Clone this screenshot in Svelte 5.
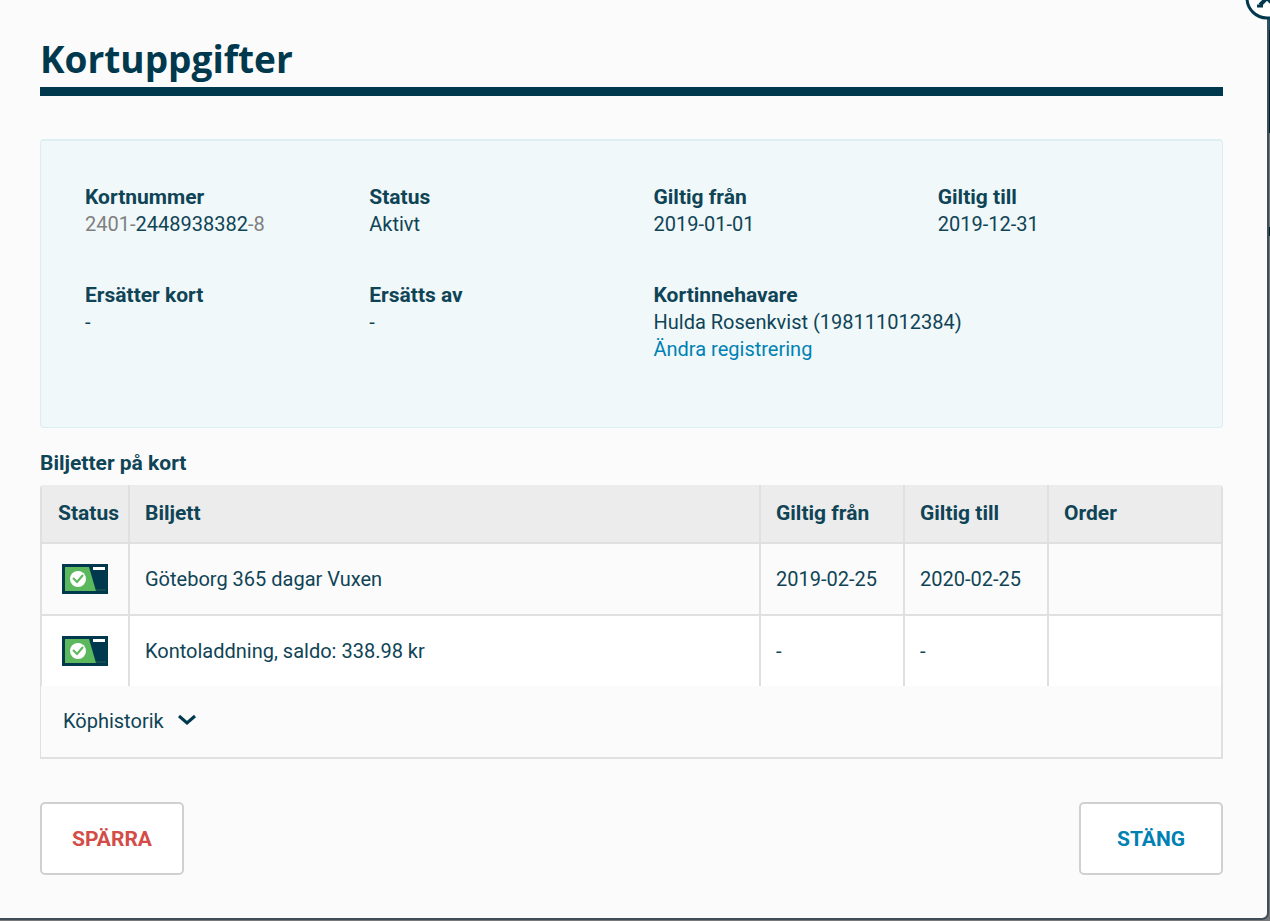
<script lang="ts">
  type Ticket = { id: number; name: string; from: string; to: string; order: string };

  const tickets: Ticket[] = [
    { id: 1, name: "Göteborg 365 dagar Vuxen", from: "2019-02-25", to: "2020-02-25", order: "" },
    { id: 2, name: "Kontoladdning, saldo: 338.98 kr", from: "-", to: "-", order: "" },
  ];

  let open = $state(true);

  function close() {
    open = false;
  }
</script>

<div class="page">
  {#if open}
    <div class="modal" role="dialog" aria-labelledby="card-title">
      <button class="close" aria-label="Stäng fönstret" onclick={close}>
        <svg viewBox="0 0 44 44" width="44" height="44" aria-hidden="true">
          <circle cx="22" cy="22" r="20" fill="#fff" stroke="#00394d" stroke-width="3" />
          <path d="M15 15l14 14M29 15L15 29" stroke="#00394d" stroke-width="4" />
          <path d="M12 30h6M26 30h6" stroke="#00394d" stroke-width="3" />
        </svg>
      </button>

      <h1 class="title" id="card-title">Kortuppgifter</h1>

      <dl class="details">
        <div class="detail">
          <dt>Kortnummer</dt>
          <dd><span class="dim">2401-</span>2448938382<span class="dim">-8</span></dd>
        </div>
        <div class="detail">
          <dt>Status</dt>
          <dd>Aktivt</dd>
        </div>
        <div class="detail">
          <dt>Giltig från</dt>
          <dd>2019-01-01</dd>
        </div>
        <div class="detail">
          <dt>Giltig till</dt>
          <dd>2019-12-31</dd>
        </div>
        <div class="detail">
          <dt>Ersätter kort</dt>
          <dd>-</dd>
        </div>
        <div class="detail">
          <dt>Ersätts av</dt>
          <dd>-</dd>
        </div>
        <div class="detail wide">
          <dt>Kortinnehavare</dt>
          <dd>Hulda Rosenkvist (198111012384)</dd>
          <dd><a class="link" href="#registrering">Ändra registrering</a></dd>
        </div>
      </dl>

      <h2 class="subtitle" id="tickets-title">Biljetter på kort</h2>

      <table class="tickets" aria-labelledby="tickets-title">
        <thead>
          <tr>
            <th class="status">Status</th>
            <th>Biljett</th>
            <th class="date">Giltig från</th>
            <th class="date">Giltig till</th>
            <th class="order">Order</th>
          </tr>
        </thead>
        <tbody>
          {#each tickets as ticket (ticket.id)}
            <tr>
              <td class="status">
                <svg class="card" viewBox="0 0 46 30" width="46" height="30" role="img" aria-label="Aktiv">
                  <rect width="46" height="30" fill="#00394d" />
                  <path d="M3 3h24l7 24H3z" fill="#5cb85c" />
                  <path d="M34 26h10" stroke="#1d6553" />
                  <rect x="31" y="3" width="12" height="3" fill="#fff" />
                  <circle cx="16" cy="15" r="8" fill="#fff" />
                  <path d="M11 14l4 4 6-7" fill="none" stroke="#5cb85c" stroke-width="2" />
                </svg>
              </td>
              <td>{ticket.name}</td>
              <td>{ticket.from}</td>
              <td>{ticket.to}</td>
              <td>{ticket.order}</td>
            </tr>
          {/each}
        </tbody>
      </table>

      <div class="history">
        <button class="toggle">
          Köphistorik
          <svg viewBox="0 0 18 16" width="18" height="16" aria-hidden="true">
            <path d="M1 2l8 7 8-7" fill="none" stroke="#00394d" stroke-width="3" />
          </svg>
        </button>
      </div>

      <div class="actions">
        <button class="btn danger">SPÄRRA</button>
        <button class="btn" onclick={close}>STÄNG</button>
      </div>
    </div>
  {/if}
</div>

<style>
  :global(body) {
    background: #6b6e70;
  }

  .page {
    box-sizing: border-box;
    min-height: 100vh;
    padding: 0 3px 3px 0;
    overflow: hidden;
    background: linear-gradient(#00506b 0 30px, #001d28 30px 133px, #77797a 133px 227px, #001d28 227px 236px, #77797a 236px);
    color: #0f4456;
    font-family: Roboto, "Liberation Sans", sans-serif;
    font-size: 20px;
    line-height: 27px;
  }

  .modal {
    position: relative;
    padding: 32px 44px 43px 40px;
    background: #fbfbfb;
    border-radius: 0 0 5px 0;
    box-shadow: 0 0 0 2px #3f4e58;
  }

  .close {
    position: absolute;
    top: -24px;
    right: -22px;
    width: 44px;
    height: 44px;
    padding: 0;
    border: 0;
    background: none;
    cursor: pointer;
  }

  .title {
    margin: 0 0 43px;
    padding-bottom: 1px;
    border-bottom: 9px solid #00394d;
    color: #00394d;
    font-family: "Open Sans", sans-serif;
    font-size: 37px;
    font-weight: 700;
    line-height: 54px;
  }

  .details {
    display: grid;
    grid-template-columns: repeat(4, 1fr);
    row-gap: 44px;
    margin: 0;
    padding: 43px 0 64px 44px;
    border: 2px solid #dceef1;
    border-width: 2px 1px 1px;
    border-radius: 4px;
    background: #f0f8fa;
  }

  .wide {
    grid-column: span 2;
  }

  dt,
  th,
  .subtitle {
    font-size: 21px;
    font-weight: 700;
  }

  dd {
    margin: 0;
  }

  .dim {
    color: #808080;
  }

  .link {
    color: #0081b3;
    text-decoration: none;
  }

  .subtitle {
    margin: 22px 0 8px;
  }

  .tickets {
    width: 100%;
    table-layout: fixed;
    border-collapse: separate;
    border-spacing: 0;
    border-right: 2px solid #e0e0e0;
    border-radius: 4px 4px 0 0;
    overflow: hidden;
  }

  th,
  td {
    box-sizing: border-box;
    padding: 0 15px;
    border-left: 2px solid #e0e0e0;
    text-align: left;
  }

  th {
    height: 57px;
    background: #ececec;
  }

  td {
    height: 72px;
    border-top: 2px solid #e0e0e0;
  }

  tbody tr:nth-child(even) {
    background: #fff;
  }

  .status {
    width: 88px;
    padding: 0;
  }

  th.status {
    padding-left: 16px;
  }

  .date {
    width: 144px;
  }

  .order {
    width: 174px;
  }

  .card {
    display: block;
    margin: 0 auto;
  }

  .history {
    padding: 22px;
    border: solid #e0e0e0;
    border-width: 0 2px 2px 1px;
  }

  .toggle {
    display: flex;
    align-items: center;
    gap: 14px;
    padding: 0;
    border: 0;
    background: none;
    color: inherit;
    font: inherit;
    cursor: pointer;
  }

  .actions {
    display: flex;
    justify-content: space-between;
    margin-top: 43px;
  }

  .btn {
    width: 144px;
    height: 73px;
    border: 2px solid #d0d0d0;
    border-radius: 5px;
    background: #fff;
    color: #0081b3;
    font-family: inherit;
    font-size: 21px;
    font-weight: 700;
    cursor: pointer;
  }

  .danger {
    color: #d34c47;
  }
</style>
